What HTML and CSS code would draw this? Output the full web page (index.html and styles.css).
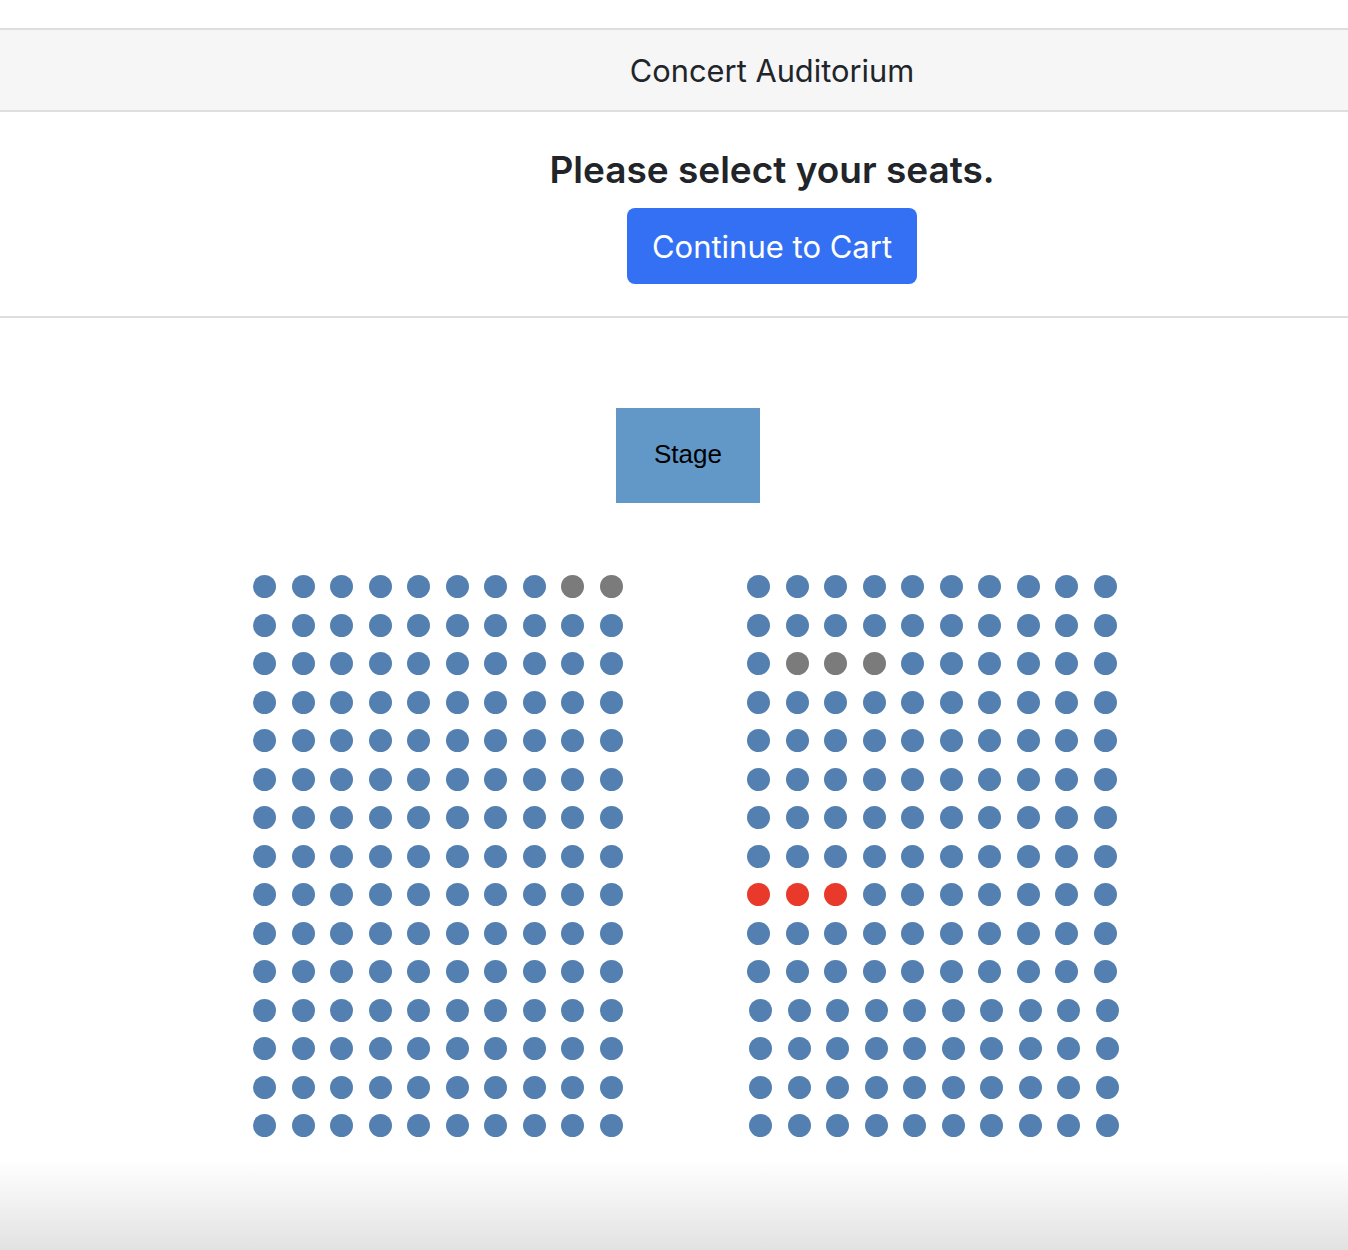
FILE: index.html
```
<!DOCTYPE html>
<html lang="en">
<head>
    <meta charset="UTF-8">
    <meta name="viewport" content="width=device-width, initial-scale=1.0">
    <title>Concert Auditorium</title>
    <link rel="stylesheet" href="styles.css">
</head>
<body>
    <header class="topBar">
        <span class="venueName">Concert Auditorium</span>
    </header>
    <section class="intro">
        <h1 class="introTitle">Please select your seats.</h1>
        <button type="button" class="cartBtn">Continue to Cart</button>
    </section>
    <main class="hall">
        <div class="stage">Stage</div>
        <div class="seatMap">
            <div class="section" id="leftSection"></div>
            <div class="section" id="rightSection"></div>
        </div>
    </main>
    <script>
        const ROWS = 15
        const COLS = 10

        // seats already sold, and the ones picked by the user: "row-col"
        const sections = {
            leftSection: { taken: ['0-8', '0-9'], picked: [], shifted: [] },
            rightSection: { taken: ['2-1', '2-2', '2-3'], picked: ['8-0', '8-1', '8-2'], shifted: [11, 12, 13, 14] }
        }

        Object.entries(sections).forEach(([id, conf]) => {
            const el = document.getElementById(id)
            for (let r = 0; r < ROWS; r++) {
                const row = document.createElement('div')
                row.className = 'seatRow'
                if (conf.shifted.includes(r)) row.classList.add('seatRowShifted')
                for (let c = 0; c < COLS; c++) {
                    const seat = document.createElement('span')
                    const key = `${r}-${c}`
                    seat.className = 'seat'
                    if (conf.taken.includes(key)) seat.classList.add('seatTaken')
                    if (conf.picked.includes(key)) seat.classList.add('seatPicked')
                    row.appendChild(seat)
                }
                el.appendChild(row)
            }
        })
    </script>
</body>
</html>
```

FILE: styles.css
```
html {
    height: 100%;
    background: linear-gradient(to bottom, #fff 1160px, #e2e2e2 1250px);
}

body {
    margin: 0;
    font-family: Inter, "Noto Sans", sans-serif;
    color: #212529;
}

.topBar {
    margin-top: 28px;
    height: 80px;
    background-color: #f6f6f6;
    border-top: 2px solid #dedede;
    border-bottom: 2px solid #dedede;
    display: flex;
    align-items: center;
    justify-content: center;
    padding-left: 196px;
}

.venueName {
    font-size: 30.8px;
}

.intro {
    padding-left: 196px;
    padding-bottom: 32px;
    border-bottom: 2px solid #dedede;
    display: flex;
    flex-direction: column;
    align-items: center;
}

.introTitle {
    margin: 35px 0 0;
    font-size: 37px;
    font-weight: 600;
    line-height: 46px;
}

.cartBtn {
    margin-top: 15px;
    height: 76px;
    padding: 0 24.5px;
    border: none;
    border-radius: 8px;
    background-color: #3470f4;
    color: #fff;
    font-family: inherit;
    font-size: 31px;
    cursor: pointer;
}

.hall {
    width: 864px;
    margin-left: 253px;
    padding-top: 90px;
}

.stage {
    width: 144px;
    height: 95px;
    margin-left: 363px;
    padding-bottom: 2px;
    box-sizing: border-box;
    background-color: #6298c8;
    color: #000;
    font-family: "Liberation Sans", Arial, sans-serif;
    font-size: 26px;
    display: flex;
    align-items: center;
    justify-content: center;
}

.seatMap {
    margin-top: 72px;
    display: flex;
    gap: 124.5px;
}

.section {
    display: flex;
    flex-direction: column;
    gap: 15.5px;
}

.seatRow {
    display: flex;
    gap: 15.5px;
}

.seatRowShifted {
    padding-left: 2px;
}

.seat {
    width: 23px;
    height: 23px;
    border-radius: 50%;
    background-color: #5380b0;
}

.seatTaken {
    background-color: #7b7b7b;
}

.seatPicked {
    background-color: #e8392b;
}
```
